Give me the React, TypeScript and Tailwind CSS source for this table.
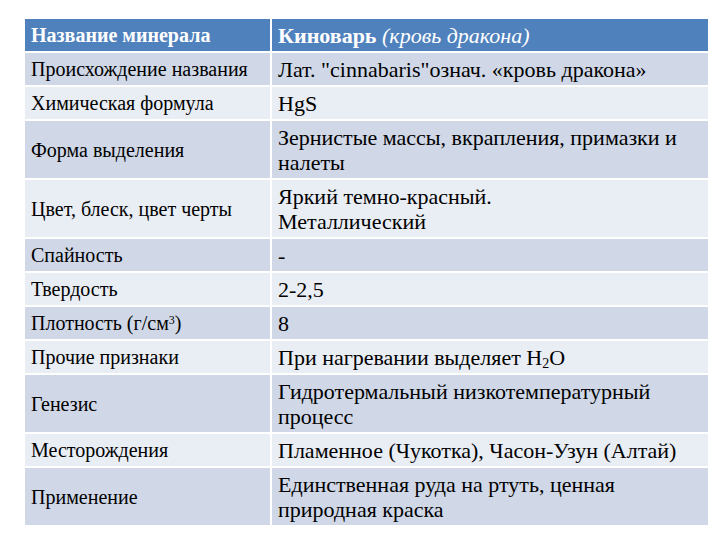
import React from "react";

type Row = {
  label: React.ReactNode;
  value: React.ReactNode;
  tall?: boolean;
};

const rows: Row[] = [
  { label: "Происхождение названия", value: "Лат. \u0022cinnabaris\u0022означ. «кровь дракона»" },
  { label: "Химическая формула", value: "HgS" },
  {
    label: "Форма выделения",
    value: (
      <>
        Зернистые массы, вкрапления, примазки и
        <br />
        налеты
      </>
    ),
    tall: true,
  },
  {
    label: "Цвет, блеск, цвет черты",
    value: (
      <>
        Яркий темно-красный.
        <br />
        Металлический
      </>
    ),
    tall: true,
  },
  { label: "Спайность", value: "-" },
  { label: "Твердость", value: "2-2,5" },
  {
    label: (
      <>
        Плотность (г/см<sup className="text-[12px]">3</sup>)
      </>
    ),
    value: "8",
  },
  {
    label: "Прочие признаки",
    value: (
      <>
        При нагревании выделяет H<sub className="text-[14px]">2</sub>O
      </>
    ),
  },
  {
    label: "Генезис",
    value: (
      <>
        Гидротермальный низкотемпературный
        <br />
        процесс
      </>
    ),
    tall: true,
  },
  { label: "Месторождения", value: "Пламенное (Чукотка), Часон-Узун (Алтай)" },
  {
    label: "Применение",
    value: (
      <>
        Единственная руда на ртуть, ценная
        <br />
        природная краска
      </>
    ),
    tall: true,
  },
];

const App = () => {
  return (
    <div className="w-[720px] h-[540px] bg-white pt-[19px] pl-[25px] font-[Liberation_Serif] text-black">
      <div className="grid w-[683px] grid-cols-[245px_436px] gap-[2px] font-[Liberation_Serif]">
        <div className="flex h-[32px] items-center bg-[#4f81bd] px-[6px] font-[Liberation_Serif] text-[20px] font-bold text-white whitespace-nowrap">
          Название минерала
        </div>
        <div className="flex h-[32px] items-center bg-[#4f81bd] px-[6px] font-[Liberation_Serif] text-[22px] font-bold text-white whitespace-nowrap">
          Киноварь&nbsp;<span className="italic font-normal">(кровь дракона)</span>
        </div>
        {rows.map((row, i) => {
          const bg = i % 2 === 0 ? "bg-[#d0d8e8]" : "bg-[#e9edf4]";
          const h = row.tall ? "h-[57px]" : "h-[32px]";
          return (
            <React.Fragment key={i}>
              <div className={`flex items-center px-[6px] font-[Liberation_Serif] text-[20px] leading-[24px] whitespace-nowrap ${bg} ${h}`}>
                <span>{row.label}</span>
              </div>
              <div className={`flex items-center px-[6px] font-[Liberation_Serif] text-[22px] leading-[25px] whitespace-nowrap ${bg} ${h}`}>
                <span>{row.value}</span>
              </div>
            </React.Fragment>
          );
        })}
      </div>
    </div>
  );
};

export default App;
